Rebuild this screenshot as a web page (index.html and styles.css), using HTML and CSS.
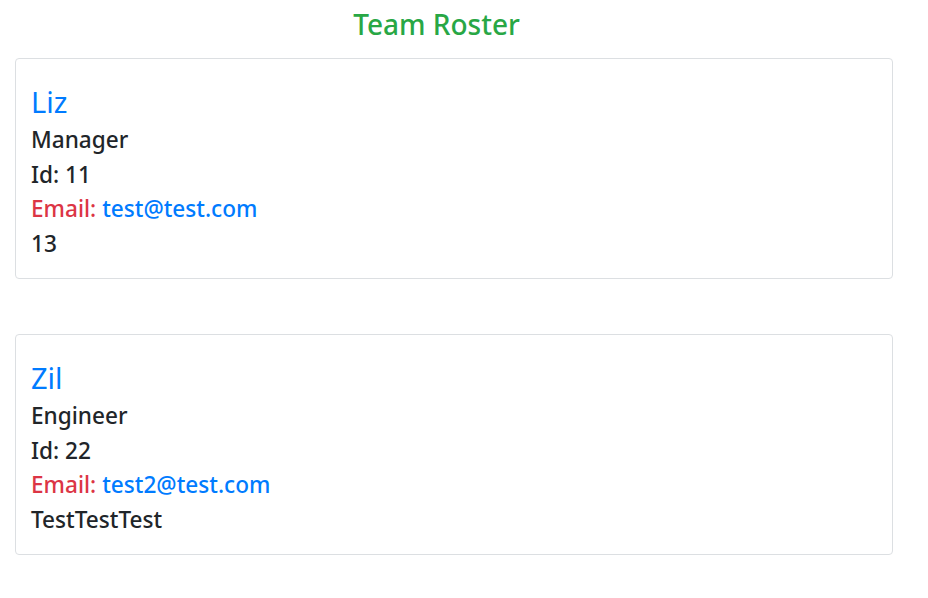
FILE: index.html
```html
<!DOCTYPE html>
<html>
<head>
<meta charset="utf-8">
<link rel="stylesheet" href="styles.css">
</head>
<body>
<header class="header">
  <h1 class="page-title">Team Roster</h1>
</header>
<main class="roster">
  <section class="card">
    <h2 class="card-name">Liz</h2>
    <p class="card-line">Manager</p>
    <p class="card-line">Id: 11</p>
    <p class="card-line"><span class="label">Email:</span> <a class="email" href="#">test@test.com</a></p>
    <p class="card-line">13</p>
  </section>
  <section class="card">
    <h2 class="card-name">Zil</h2>
    <p class="card-line">Engineer</p>
    <p class="card-line">Id: 22</p>
    <p class="card-line"><span class="label">Email:</span> <a class="email" href="#">test2@test.com</a></p>
    <p class="card-line">TestTestTest</p>
  </section>
</main>
</body>
</html>
```
FILE: styles.css
```css
* { box-sizing: border-box; }
body {
  margin: 0;
  background: #fff;
  font-family: "Noto Sans", "Open Sans", sans-serif;
  color: #212529;
}
.header {
  width: 873px;
  text-align: center;
  padding-top: 6px;
}
.page-title {
  margin: 0;
  font-size: 28px;
  font-weight: 500;
  line-height: 36px;
  color: #28a745;
}
.roster {
  display: flex;
  flex-direction: column;
  gap: 55px;
  padding: 16px 35px 0 15px;
}
.card {
  border: 1px solid #dcdfe2;
  border-radius: 4px;
  padding: 26px 16px 17px 15px;
}
.card-name {
  margin: 0 0 4px;
  font-size: 29px;
  font-weight: 400;
  line-height: 34px;
  color: #007bff;
}
.card-line {
  margin: 0;
  font-size: 22.6px;
  line-height: 34.5px;
  font-weight: 500;
}
.label { color: #dc3545; }
.email { color: #007bff; text-decoration: none; }
```
